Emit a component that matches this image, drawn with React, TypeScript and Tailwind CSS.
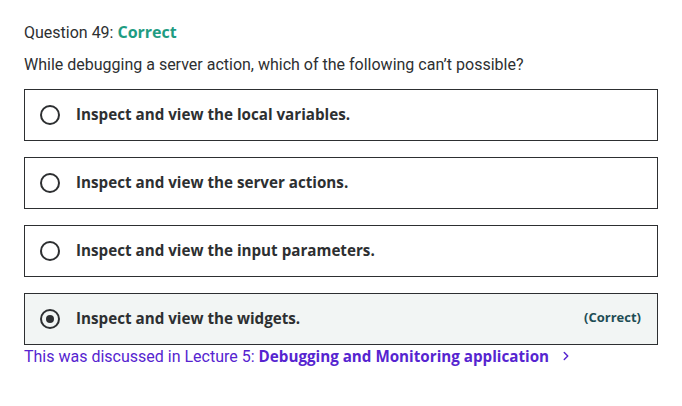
import { ChevronRight } from "lucide-react"

const OPTIONS = [
  { text: "Inspect and view the local variables.", correct: false },
  { text: "Inspect and view the server actions.", correct: false },
  { text: "Inspect and view the input parameters.", correct: false },
  { text: "Inspect and view the widgets.", correct: true },
]

export default function App() {
  return (
    <div className="w-[682px] h-[406px] bg-white px-6 pt-[22px] text-[#2d2f31] font-['Roboto',sans-serif]">
      <div className="h-[20px] text-[16px] leading-[20px] flex items-baseline">
        <span>Question 49:&nbsp;</span>
        <span className="font-bold text-[16px] leading-[20px] font-['Open_Sans',sans-serif] text-[#1e9c82]">Correct</span>
      </div>
      <p className="mt-[12px] text-[16px] leading-[22px]">
        While debugging a server action, which of the following can’t possible?
      </p>
      <div className="mt-[13px] flex flex-col gap-4 w-[634px]">
        {OPTIONS.map((o) => (
          <div key={o.text}
            className={`h-[52px] border border-[#2d2f31] flex items-center pl-[15px] pr-4 ${o.correct ? "bg-[#f2f5f4]" : "bg-white"}`}>
            <span className="w-5 h-5 rounded-full border-2 border-[#2d2f31] flex items-center justify-center flex-shrink-0">
              {o.correct && <span className="w-2 h-2 rounded-full bg-[#2d2f31]" />}
            </span>
            <span className="ml-4 -mt-[2px] text-[15.2px] font-bold font-['Open_Sans',sans-serif]">{o.text}</span>
            {o.correct && <span className="ml-auto -mt-[2px] text-[13px] font-bold font-['Open_Sans',sans-serif] text-[#1e4d55]">(Correct)</span>}
          </div>
        ))}
      </div>
      <div className="h-[22px] mt-0 flex items-baseline text-[16px] leading-[22px] text-[#5624d0]">
        <span>This was discussed in Lecture 5:&nbsp;</span>
        <span className="font-bold font-['Open_Sans',sans-serif] text-[15.2px] leading-[22px]">Debugging and Monitoring application</span>
        <ChevronRight size={14} strokeWidth={2.5} className="ml-[10px] self-center" />
      </div>
    </div>
  )
}
